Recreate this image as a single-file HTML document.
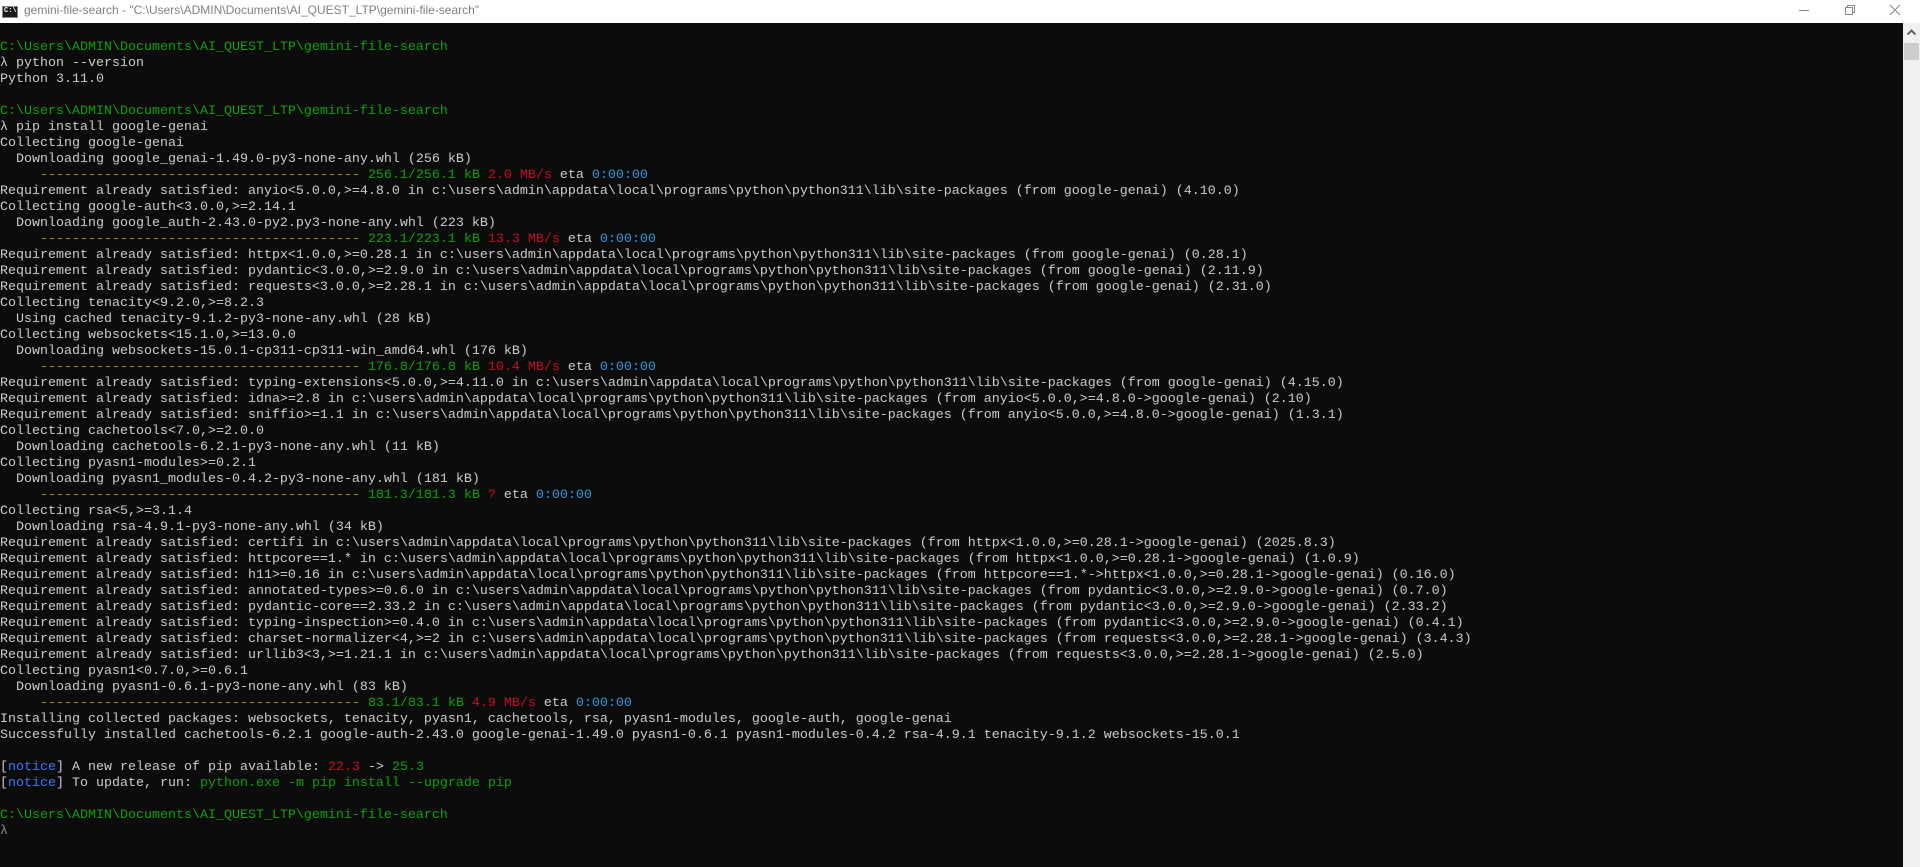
<!DOCTYPE html>
<html><head><meta charset="utf-8"><style>
html,body{margin:0;padding:0;width:1920px;height:867px;overflow:hidden;background:#0c0c0c}
#tb{position:absolute;left:0;top:0;width:1920px;height:23px;background:#fff}
#tb .t{position:absolute;left:24px;top:3px;font:12px "Liberation Sans",sans-serif;color:#808080;white-space:pre}
#ico{position:absolute;left:2px;top:6px;width:14px;height:10px;background:#1a1a1a;border:1px solid #888}
#ico span{position:absolute;left:1px;top:0px;font:bold 7px "Liberation Mono",monospace;color:#fff}
#term{position:absolute;left:0;top:24px;width:1903px;font-family:"Liberation Mono",monospace;font-size:13.33px;line-height:16px;color:#cccccc;white-space:pre}
.g{color:#13a10e}.y{color:#c19c00}.r{color:#c50f1f}.b{color:#3a96dd}.n{color:#3b78ff}
#sb{position:absolute;left:1903px;top:23px;width:17px;height:844px;background:#f0f0f0}
#th{position:absolute;left:1px;top:20px;width:15px;height:17px;background:#cdcdcd}
</style></head><body>
<div id="tb"><div id="ico"><span>C:\</span></div><div class="t">gemini-file-search - "C:\Users\ADMIN\Documents\AI_QUEST_LTP\gemini-file-search"</div>
<svg style="position:absolute;left:1790px;top:0" width="130" height="23">
<line x1="9" y1="10.5" x2="19" y2="10.5" stroke="#888" stroke-width="1"/>
<rect x="55.5" y="7.5" width="7" height="7" fill="none" stroke="#888"/><path d="M57.5 7.5V5.5H64.5V12.5H62.5" fill="none" stroke="#888"/>
<path d="M100 5L110 15M110 5L100 15" stroke="#888" stroke-width="1"/>
</svg></div>
<div id="term">
<span class="g">C:\Users\ADMIN\Documents\AI_QUEST_LTP\gemini-file-search</span>
λ python --version
Python 3.11.0

<span class="g">C:\Users\ADMIN\Documents\AI_QUEST_LTP\gemini-file-search</span>
λ pip install google-genai
Collecting google-genai
  Downloading google_genai-1.49.0-py3-none-any.whl (256 kB)
     <span class="y">----------------------------------------</span> <span class="g">256.1/256.1 kB</span> <span class="r">2.0 MB/s</span> eta <span class="b">0:00:00</span>
Requirement already satisfied: anyio&lt;5.0.0,&gt;=4.8.0 in c:\users\admin\appdata\local\programs\python\python311\lib\site-packages (from google-genai) (4.10.0)
Collecting google-auth&lt;3.0.0,&gt;=2.14.1
  Downloading google_auth-2.43.0-py2.py3-none-any.whl (223 kB)
     <span class="y">----------------------------------------</span> <span class="g">223.1/223.1 kB</span> <span class="r">13.3 MB/s</span> eta <span class="b">0:00:00</span>
Requirement already satisfied: httpx&lt;1.0.0,&gt;=0.28.1 in c:\users\admin\appdata\local\programs\python\python311\lib\site-packages (from google-genai) (0.28.1)
Requirement already satisfied: pydantic&lt;3.0.0,&gt;=2.9.0 in c:\users\admin\appdata\local\programs\python\python311\lib\site-packages (from google-genai) (2.11.9)
Requirement already satisfied: requests&lt;3.0.0,&gt;=2.28.1 in c:\users\admin\appdata\local\programs\python\python311\lib\site-packages (from google-genai) (2.31.0)
Collecting tenacity&lt;9.2.0,&gt;=8.2.3
  Using cached tenacity-9.1.2-py3-none-any.whl (28 kB)
Collecting websockets&lt;15.1.0,&gt;=13.0.0
  Downloading websockets-15.0.1-cp311-cp311-win_amd64.whl (176 kB)
     <span class="y">----------------------------------------</span> <span class="g">176.8/176.8 kB</span> <span class="r">10.4 MB/s</span> eta <span class="b">0:00:00</span>
Requirement already satisfied: typing-extensions&lt;5.0.0,&gt;=4.11.0 in c:\users\admin\appdata\local\programs\python\python311\lib\site-packages (from google-genai) (4.15.0)
Requirement already satisfied: idna&gt;=2.8 in c:\users\admin\appdata\local\programs\python\python311\lib\site-packages (from anyio&lt;5.0.0,&gt;=4.8.0-&gt;google-genai) (2.10)
Requirement already satisfied: sniffio&gt;=1.1 in c:\users\admin\appdata\local\programs\python\python311\lib\site-packages (from anyio&lt;5.0.0,&gt;=4.8.0-&gt;google-genai) (1.3.1)
Collecting cachetools&lt;7.0,&gt;=2.0.0
  Downloading cachetools-6.2.1-py3-none-any.whl (11 kB)
Collecting pyasn1-modules&gt;=0.2.1
  Downloading pyasn1_modules-0.4.2-py3-none-any.whl (181 kB)
     <span class="y">----------------------------------------</span> <span class="g">181.3/181.3 kB</span> <span class="r">?</span> eta <span class="b">0:00:00</span>
Collecting rsa&lt;5,&gt;=3.1.4
  Downloading rsa-4.9.1-py3-none-any.whl (34 kB)
Requirement already satisfied: certifi in c:\users\admin\appdata\local\programs\python\python311\lib\site-packages (from httpx&lt;1.0.0,&gt;=0.28.1-&gt;google-genai) (2025.8.3)
Requirement already satisfied: httpcore==1.* in c:\users\admin\appdata\local\programs\python\python311\lib\site-packages (from httpx&lt;1.0.0,&gt;=0.28.1-&gt;google-genai) (1.0.9)
Requirement already satisfied: h11&gt;=0.16 in c:\users\admin\appdata\local\programs\python\python311\lib\site-packages (from httpcore==1.*-&gt;httpx&lt;1.0.0,&gt;=0.28.1-&gt;google-genai) (0.16.0)
Requirement already satisfied: annotated-types&gt;=0.6.0 in c:\users\admin\appdata\local\programs\python\python311\lib\site-packages (from pydantic&lt;3.0.0,&gt;=2.9.0-&gt;google-genai) (0.7.0)
Requirement already satisfied: pydantic-core==2.33.2 in c:\users\admin\appdata\local\programs\python\python311\lib\site-packages (from pydantic&lt;3.0.0,&gt;=2.9.0-&gt;google-genai) (2.33.2)
Requirement already satisfied: typing-inspection&gt;=0.4.0 in c:\users\admin\appdata\local\programs\python\python311\lib\site-packages (from pydantic&lt;3.0.0,&gt;=2.9.0-&gt;google-genai) (0.4.1)
Requirement already satisfied: charset-normalizer&lt;4,&gt;=2 in c:\users\admin\appdata\local\programs\python\python311\lib\site-packages (from requests&lt;3.0.0,&gt;=2.28.1-&gt;google-genai) (3.4.3)
Requirement already satisfied: urllib3&lt;3,&gt;=1.21.1 in c:\users\admin\appdata\local\programs\python\python311\lib\site-packages (from requests&lt;3.0.0,&gt;=2.28.1-&gt;google-genai) (2.5.0)
Collecting pyasn1&lt;0.7.0,&gt;=0.6.1
  Downloading pyasn1-0.6.1-py3-none-any.whl (83 kB)
     <span class="y">----------------------------------------</span> <span class="g">83.1/83.1 kB</span> <span class="r">4.9 MB/s</span> eta <span class="b">0:00:00</span>
Installing collected packages: websockets, tenacity, pyasn1, cachetools, rsa, pyasn1-modules, google-auth, google-genai
Successfully installed cachetools-6.2.1 google-auth-2.43.0 google-genai-1.49.0 pyasn1-0.6.1 pyasn1-modules-0.4.2 rsa-4.9.1 tenacity-9.1.2 websockets-15.0.1

[<span class="n">notice</span>] A new release of pip available: <span class="r">22.3</span> -&gt; <span class="g">25.3</span>
[<span class="n">notice</span>] To update, run: <span class="g">python.exe -m pip install --upgrade pip</span>

<span class="g">C:\Users\ADMIN\Documents\AI_QUEST_LTP\gemini-file-search</span>
<span style="color:#888">λ</span></div>
<div id="sb"><svg style="position:absolute;left:4px;top:6px" width="9" height="7"><path d="M0.5 5.5L4.5 1.5L8.5 5.5" fill="none" stroke="#606060" stroke-width="2"/></svg><div id="th"></div></div>
</body></html>
